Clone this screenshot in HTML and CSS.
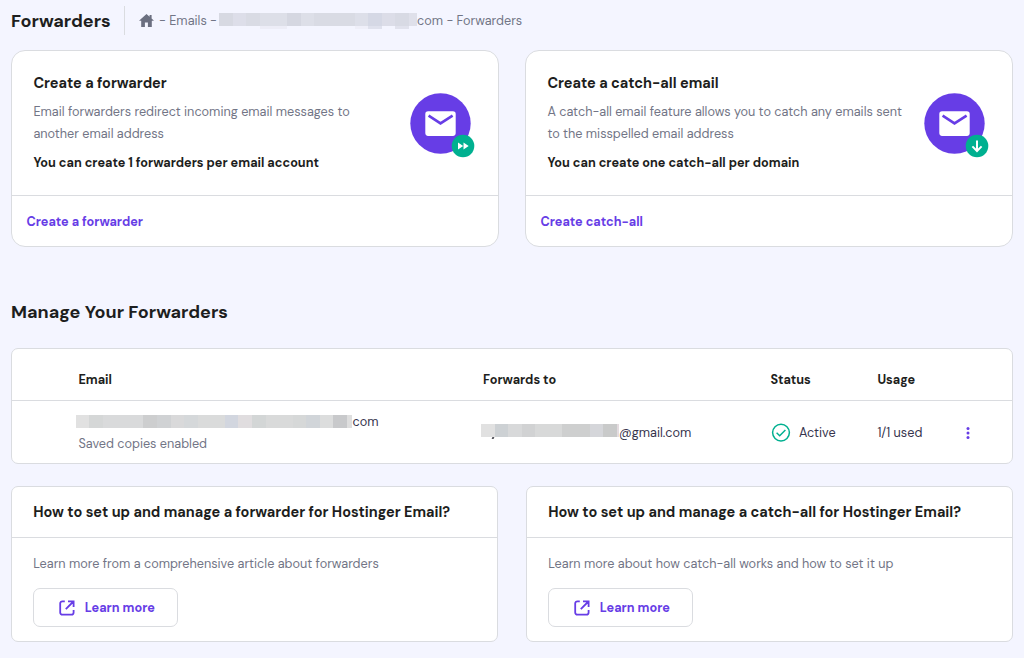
FILE: index.html
```html
<!DOCTYPE html>
<html lang="en">
<head>
    <meta charset="UTF-8">
    <meta name="viewport" content="width=device-width, initial-scale=1.0">
    <title>Forwarders</title>
    <link rel="stylesheet" href="styles.css">
</head>
<body>
    <header class="top">
        <h1>Forwarders</h1>
        <nav class="crumbs">
            <svg class="home" viewBox="0 0 15 13"><path fill="#6b6f80" d="M7.5 0 0 6.8h2.2V13h3.7V8.6h3V13h3.9V6.8H15L12.6 4.6V1h-2v1.8z"/></svg>
            <span class="crumb-1">- Emails -</span>
            <span class="mask mask-crumb"></span>
            <span>com - Forwarders</span>
        </nav>
    </header>

    <section class="cards">
        <div class="card">
            <div class="card-main">
                <div class="card-text">
                    <h3>Create a forwarder</h3>
                    <p>Email forwarders redirect incoming email messages to<br>another email address</p>
                    <b>You can create 1 forwarders per email account</b>
                </div>
                <svg class="mail" viewBox="0 0 66 66">
                    <circle cx="30.5" cy="30.5" r="30.2" fill="#673de6"/>
                    <rect x="15.3" y="18.3" width="30.4" height="24.6" rx="2.8" fill="#fff"/>
                    <path d="M18.6 22.6 30.5 30.4 42.6 22.6" fill="none" stroke="#673de6" stroke-width="2.6"/>
                    <circle cx="53" cy="53" r="11.3" fill="#00b090"/>
                    <path d="M48 49.4v7.2l5.2-3.6zM53.5 49.4v7.2l5.2-3.6z" fill="#fff"/>
                </svg>
            </div>
            <div class="card-foot"><a href="#">Create a forwarder</a></div>
        </div>
        <div class="card">
            <div class="card-main">
                <div class="card-text">
                    <h3>Create a catch-all email</h3>
                    <p>A catch-all email feature allows you to catch any emails sent<br>to the misspelled email address</p>
                    <b>You can create one catch-all per domain</b>
                </div>
                <svg class="mail" viewBox="0 0 66 66">
                    <circle cx="30.5" cy="30.5" r="30.2" fill="#673de6"/>
                    <rect x="15.3" y="18.3" width="30.4" height="24.6" rx="2.8" fill="#fff"/>
                    <path d="M18.6 22.6 30.5 30.4 42.6 22.6" fill="none" stroke="#673de6" stroke-width="2.6"/>
                    <circle cx="53" cy="53" r="11.3" fill="#00b090"/>
                    <path d="M53 47.6v10M48.4 53.4l4.6 4.6 4.6-4.6" fill="none" stroke="#fff" stroke-width="2"/>
                </svg>
            </div>
            <div class="card-foot"><a href="#">Create catch-all</a></div>
        </div>
    </section>

    <h2>Manage Your Forwarders</h2>

    <section class="table">
        <div class="row head">
            <span>Email</span>
            <span>Forwards to</span>
            <span>Status</span>
            <span>Usage</span>
        </div>
        <div class="row line">
            <div>
                <div class="email"><span class="mask mask-email"></span><span>com</span></div>
                <div class="saved">Saved copies enabled</div>
            </div>
            <div class="to"><span class="mask mask-to"></span><span>@gmail.com</span></div>
            <div class="status">
                <svg class="check" viewBox="0 0 20 20" fill="none" stroke="#00b090" stroke-width="1.5"><circle cx="10" cy="9.6" r="8.4"/><path d="M5.6 9.8 8.7 12.8 14.4 7"/></svg>
                <span>Active</span>
            </div>
            <div class="used">1/1 used</div>
            <svg class="dots" viewBox="0 0 4 12" fill="#673de6"><circle cx="2" cy="1.6" r="1.5"/><circle cx="2" cy="6" r="1.5"/><circle cx="2" cy="10.4" r="1.5"/></svg>
        </div>
    </section>

    <section class="helps">
        <div class="help">
            <h3>How to set up and manage a forwarder for Hostinger Email?</h3>
            <div class="help-body">
                <p>Learn more from a comprehensive article about forwarders</p>
                <a href="#" class="btn">
                    <svg viewBox="0 0 16 16" fill="none" stroke="#673de6" stroke-width="1.8"><path d="M5.8 1.3H3.4A2.2 2.2 0 0 0 1.2 3.5v9A2.2 2.2 0 0 0 3.4 14.7h9a2.2 2.2 0 0 0 2.2-2.2V10M9 1.3h5.6V7M14.4 1.5 6.8 9.1"/></svg>
                    <span>Learn more</span>
                </a>
            </div>
        </div>
        <div class="help">
            <h3>How to set up and manage a catch-all for Hostinger Email?</h3>
            <div class="help-body">
                <p>Learn more about how catch-all works and how to set it up</p>
                <a href="#" class="btn">
                    <svg viewBox="0 0 16 16" fill="none" stroke="#673de6" stroke-width="1.8"><path d="M5.8 1.3H3.4A2.2 2.2 0 0 0 1.2 3.5v9A2.2 2.2 0 0 0 3.4 14.7h9a2.2 2.2 0 0 0 2.2-2.2V10M9 1.3h5.6V7M14.4 1.5 6.8 9.1"/></svg>
                    <span>Learn more</span>
                </a>
            </div>
        </div>
    </section>
</body>
</html>
```
FILE: styles.css
```css
* {
    box-sizing: border-box;
}
body {
    margin: 0;
    padding: 0 11px;
    height: 658px;
    overflow: hidden;
    background: #f4f5ff;
    color: #1d1e20;
    font-family: "DM Sans", Inter, "Liberation Sans", sans-serif;
    font-size: 12.67px;
    line-height: 22px;
    white-space: nowrap;
}
h1,h2,h3,p {
    margin: 0;
}
h1,h2,h3,b,a {
    font-weight: 700;
}
a {
    color: #673de6;
    text-decoration: none;
}
.top {
    display: flex;
    align-items: center;
    height: 50px;
    padding-bottom: 9px;
}
h1 {
    width: 114px;
    height: 29px;
    line-height: 30px;
    font-size: 18.05px;
    border-right: 1px solid #dadce0;
}
.crumbs {
    display: flex;
    align-items: center;
    padding: 1px 0 0 14px;
    color: #727586;
}
.home {
    width: 15px;
    height: 13px;
    margin: -2px 5px 0 0;
}
.crumb-1 {
    width: 60px;
}
.mask {
    flex: none;
    height: 13px;
}
/* second layer is the few cells that hang below the strip */
.mask-crumb {
    width: 198px;
    height: 16px;
    margin-top: -1px;
    background:
        linear-gradient(90deg, #d7d9e2 0 14px, #dddee9 14px 27px, #d9dbe4 27px 41px, #dddfe8 41px 68px, #d5d7e1 68px 82px, #dddfe8 82px 95px, #d9dbe4 95px 136px, #dddfe9 136px 149px, #d5d8e5 149px 163px, #dcdde8 163px 176px, #d8dae4 176px 190px, #dfe0ea 190px) 0 0 / 198px 13px no-repeat,
        linear-gradient(90deg, transparent 0 41px, #ededf7 41px 68px, transparent 68px 136px, #efeff9 136px 149px, #dfe1ed 149px 163px, transparent 163px 176px, #e1e2ed 176px 190px, transparent 190px);
}
.cards {
    display: flex;
    gap: 26px;
}
.card {
    width: 488px;
    height: 197px;
    background: #fff;
    border: 1px solid #dadce0;
    border-radius: 14px;
}
.card-main {
    display: flex;
    justify-content: space-between;
    height: 145px;
    padding: 21px 22px 0 21.4px;
    border-bottom: 1px solid #dadce0;
}
.card h3 {
    font-size: 14.47px;
    margin-bottom: 7px;
}
.card p {
    color: #727586;
    line-height: 21.5px;
    margin-bottom: 8px;
}
.card-text b {
    display: block;
    line-height: 21px;
}
.mail {
    width: 66px;
    height: 66px;
    margin-top: 20.5px;
}
.card-foot {
    padding: 15px 14.4px 0;
}
h2 {
    margin-top: 51px;
    height: 50px;
    line-height: 28px;
    font-size: 18.05px;
}
.table {
    height: 116px;
    background: #fff;
    border: 1px solid #dadce0;
    border-radius: 7px;
}
.row {
    display: grid;
    grid-template-columns: 404.6px 287.4px 107px 88px 10px;
    padding-left: 66.4px;
    align-items: center;
}
.head {
    height: 52px;
    padding-top: 10px;
    border-bottom: 1px solid #dadce0;
    font-weight: 700;
}
.line {
    height: 63px;
    color: #36344d;
}
.email, .to, .status {
    display: flex;
    align-items: center;
}
.email {
    margin-left: -2.4px;
}
.saved {
    color: #727586;
}
.mask-email {
    width: 276px;
    margin-right: 0.6px;
    background: linear-gradient(90deg, #e1e1e1 0 13px, #d5d7d7 13px 27px, #d9dadb 27px 67px, #cdcecf 67px 81px, #d0d2d4 81px 95px, #d9d9da 95px 108px, #d5d8da 108px 122px, #dadbdb 122px 149px, #d2d6df 149px 162px, #e0dddf 162px 176px, #d3d6d6 176px 190px, #d9dada 190px 217px, #d6d8d8 217px 230px, #d1d5d9 230px 244px, #dcdddd 244px 257px, #c8c9cb 257px 271px, #dedede 271px);
}
.to {
    margin-left: -2px;
}
.mask-to {
    width: 138px;
    margin-top: -4px;
    background: linear-gradient(90deg, #e1e1e1 0 14px, #cdd1d4 14px 27px, #d8d9da 27px 41px, #d1d2d3 41px 54px, #d8d9d9 54px 81px, #cecfcf 81px 109px, #d5d6da 109px 122px, #c9caca 122px 136px, #e4dce0 136px);
}
/* tail of a letter showing under the strip */
.mask-to::after {
    content: "";
    display: block;
    width: 2px;
    height: 2px;
    margin: 13px 0 0 11px;
    background: #55555c;
    transform: skewX(-20deg);
}
.check {
    width: 20px;
    height: 20px;
    margin: 0 8px 0 0.6px;
}
.dots {
    width: 4px;
    height: 12px;
    margin-left: 0.6px;
}
.helps {
    display: flex;
    gap: 28px;
    margin-top: 22px;
}
.help {
    flex: 1;
    height: 156px;
    background: #fff;
    border: 1px solid #dadce0;
    border-radius: 7px;
}
.help h3 {
    height: 51px;
    line-height: 51px;
    padding-left: 21.2px;
    font-size: 14.47px;
    border-bottom: 1px solid #dadce0;
}
.help-body {
    padding: 15px 21.2px;
}
.help p {
    color: #727586;
    margin-bottom: 13px;
}
.btn {
    display: flex;
    align-items: center;
    width: 145px;
    height: 39px;
    padding-left: 25px;
    border: 1px solid #dadce0;
    border-radius: 7px;
}
.btn svg {
    width: 16px;
    height: 16px;
    margin-right: 9.6px;
}
```
